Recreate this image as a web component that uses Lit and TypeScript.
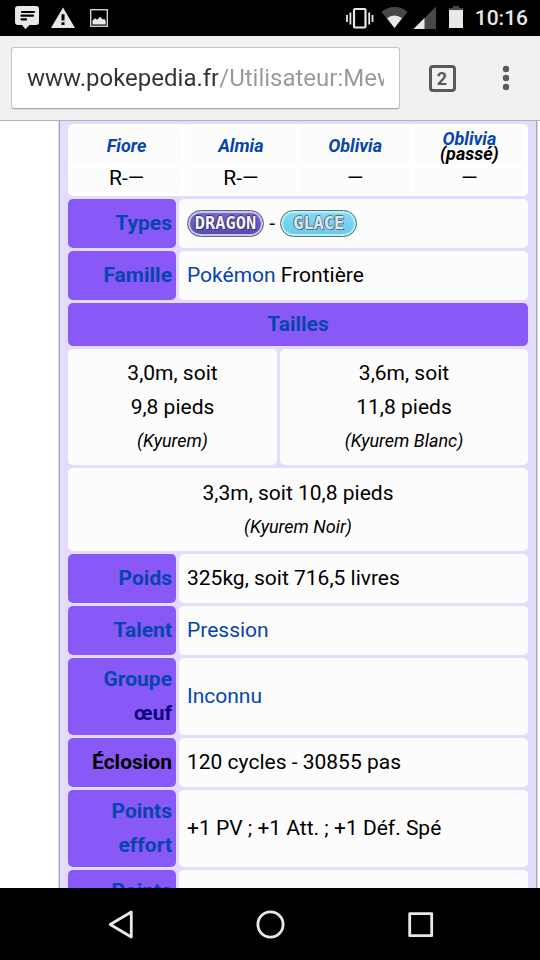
import { LitElement, html, css } from "lit";
import { customElement } from "lit/decorators.js";

@customElement("status-bar")
class StatusBar extends LitElement {
  static styles = css`
    :host {
      display: flex;
      justify-content: space-between;
      align-items: center;
      height: 36px;
      flex: none;
      padding: 0 12px 0 13px;
      background: #000;
      color: #e8e8e8;
    }
    .group {
      display: flex;
      align-items: center;
    }
    .notifications {
      gap: 8px;
    }
    .system {
      gap: 4px;
    }
    svg {
      display: block;
    }
    .time {
      font-size: 21px;
      line-height: 38px;
      font-weight: 500;
    }
  `;

  render() {
    return html`
      <div class="group notifications">
        <svg width="28" height="36" viewBox="0 0 28 36" aria-label="Message">
          <path fill="#e8e8e8" d="M5 6h18a3 3 0 0 1 3 3v13a3 3 0 0 1-3 3h-6.500l-4 4.300L9 25H5a3 3 0 0 1-3-3V9a3 3 0 0 1 3-3z" />
          <path stroke="#000" stroke-width="2.200" stroke-linecap="round" fill="none" d="M9 12h12M8.500 15.700h11.500M8.500 19.400h4.500" />
        </svg>
        <svg width="28" height="36" viewBox="0 0 28 36" aria-label="Avertissement">
          <path fill="#e8e8e8" d="M14 7.500L26 28H2z" />
          <path fill="#000" d="M12.500 14.200h3v6.300h-3zM12.500 22.300h3v2.800h-3z" />
        </svg>
        <svg width="28" height="36" viewBox="0 0 28 36" aria-label="Image">
          <rect x="5.700" y="9.700" width="16.600" height="16.600" fill="none" stroke="#d0d0d0" stroke-width="1.400" />
          <path fill="#e8e8e8" d="M7.500 24.500v-4l2.500-2.200 2 1.500 3.300-3 2.400 2.600 1.500-.700 1.500 2.300v3.500z" />
        </svg>
      </div>
      <div class="group system">
        <svg width="30" height="36" viewBox="0 0 30 36" aria-label="Vibreur">
          <rect x="9" y="9" width="11.500" height="18.500" rx="1" fill="none" stroke="#e8e8e8" stroke-width="2.200" />
          <path stroke="#e8e8e8" stroke-width="1.800" d="M5.400 12.500v12M2 15v7M24.200 12.500v12M27.500 15v7" />
        </svg>
        <svg width="30" height="36" viewBox="0 0 30 36" aria-label="Wi-Fi">
          <path fill="#484848" d="M2.500 12a19.500 19.500 0 0 1 26 0L15.500 28z" />
          <path fill="#e8e8e8" d="M8 18.200a12 12 0 0 1 15 0L15.500 28z" />
        </svg>
        <svg width="24" height="36" viewBox="0 0 24 36" aria-label="Réseau">
          <path fill="#484848" d="M23 6.500V29H.500z" />
          <path fill="#e8e8e8" d="M11.500 18v11H.500z" />
        </svg>
        <svg width="30" height="36" viewBox="0 0 30 36" aria-label="Batterie">
          <path fill="#484848" d="M12 6h6v2h4v3H8V8h4z" />
          <path fill="#e8e8e8" d="M8 10h14v18H8z" />
        </svg>
        <span class="time">10:16</span>
      </div>
    `;
  }
}

@customElement("browser-toolbar")
class BrowserToolbar extends LitElement {
  static styles = css`
    :host {
      display: flex;
      align-items: center;
      flex: none;
      box-sizing: border-box;
      height: 85px;
      padding: 0 2px 0 11px;
      background: #f1f1f1;
      border-bottom: 1px solid #b4b4b4;
    }
    .url {
      flex: 1;
      min-width: 0;
      box-sizing: border-box;
      height: 62px;
      margin: 0 10px 0 0;
      padding: 0 15px;
      border: 1px solid #c4c4c4;
      border-bottom-color: #a8a8a8;
      border-radius: 3px;
      background: #fff;
      display: flex;
      align-items: center;
      box-shadow: 0 1px 1px #ddd;
    }
    input {
      width: 100%;
      height: 38px;
      padding: 0;
      border: 0;
      outline: 0;
      font: 24px/38px Roboto, sans-serif;
      background: linear-gradient(90deg, #333 191px, #999 191px);
      -webkit-background-clip: text;
      background-clip: text;
      -webkit-text-fill-color: transparent;
    }
    button {
      width: 64px;
      height: 64px;
      padding: 0;
      border: 0;
      background: none;
      display: flex;
      align-items: center;
      justify-content: center;
    }
    .count {
      box-sizing: border-box;
      width: 27px;
      height: 27px;
      border: 3px solid #5a5a5a;
      border-radius: 4px;
      color: #5a5a5a;
      font: bold 18px/21px Roboto, sans-serif;
      text-align: center;
    }
  `;

  render() {
    return html`
      <div class="url">
        <input aria-label="Adresse" value="www.pokepedia.fr/Utilisateur:Mewtwo" />
      </div>
      <button aria-label="Onglets"><span class="count">2</span></button>
      <button aria-label="Menu">
        <svg width="8" height="26" viewBox="0 0 8 26" fill="#5a5a5a">
          <circle cx="4" cy="4" r="3.200" />
          <circle cx="4" cy="13" r="3.200" />
          <circle cx="4" cy="22" r="3.200" />
        </svg>
      </button>
    `;
  }
}

@customElement("type-badge")
class TypeBadge extends LitElement {
  static properties = { kind: { type: String }, label: { type: String } };
  declare kind: string;
  declare label: string;

  static styles = css`
    :host {
      display: inline-block;
      vertical-align: middle;
    }
    .badge {
      display: block;
      box-sizing: border-box;
      width: 77px;
      height: 27px;
      border: 1px solid #5c6f66;
      border-radius: 14px;
      font: bold 17px/25px "DejaVu Sans Mono", monospace;
      text-align: center;
      color: #f4f4fa;
    }
    .dragon {
      background: linear-gradient(#7a68d8, #5a48b0);
      box-shadow: inset 0 0 0 2px #c9c4ea;
      text-shadow: 1px 1px 0 #3b3170, -1px 0 0 #3b3170, 0 -1px 0 #3b3170;
    }
    .glace {
      background: linear-gradient(#84dcf4, #6cc8ea);
      box-shadow: inset 0 0 0 2px #b4f0f4;
      color: #dfe6ea;
      text-shadow: 1px 1px 0 #4c7286, -1px 0 0 #4c7286, 0 -1px 0 #4c7286;
    }
  `;

  render() {
    return html`<span class="badge ${this.kind}">${this.label}</span>`;
  }
}

@customElement("pokemon-infobox")
class PokemonInfobox extends LitElement {
  static styles = css`
    :host {
      display: block;
      padding: 0 5px;
      border: solid #a8a8a8;
      border-width: 0 1px;
      box-shadow: 0 0 0 1px #d8d8d4;
      background: #e5dcfd;
      color: #000;
      font-size: 21px;
      line-height: 34px;
    }
    a {
      color: #0645ad;
      text-decoration: none;
    }
    table {
      width: 100%;
      table-layout: fixed;
      border-spacing: 3px;
    }
    .label {
      width: 108px;
    }
    .split {
      width: 98px;
    }
    th,
    td {
      box-sizing: border-box;
      border-radius: 5px;
    }
    td {
      background: #fcfcfc;
      height: 49px;
      padding: 0 8px 2px;
    }
    th {
      background: #8859f7;
      padding: 3px 4px 5px;
      text-align: right;
    }
    .title {
      height: 43px;
      text-align: center;
    }
    .size {
      height: 83px;
      padding: 7px 8px;
      text-align: center;
    }
    .size i {
      display: block;
      font-size: 18px;
    }
    .double {
      height: 77px;
    }
    .plain {
      color: #10007e;
    }
    .games {
      height: auto;
      padding: 0;
      background: #fff;
    }
    .games th {
      height: 37px;
      padding: 0;
      background: #fcfcfc;
      text-align: center;
      font-size: 18px;
      line-height: 15px;
      font-style: italic;
    }
    .games td {
      height: 26px;
      padding: 0 0 4px;
      text-align: center;
      line-height: 22px;
    }
  `;

  row(label: unknown, value: unknown, double = false) {
    return html`<tr>
      <th scope="row" class=${double ? "double" : ""}>${label}</th>
      <td colspan="2">${value}</td>
    </tr>`;
  }

  render() {
    const link = (text: string) => html`<a href="#">${text}</a>`;
    return html`
      <table>
        <colgroup>
          <col class="label" />
          <col class="split" />
          <col />
        </colgroup>
        <tbody>
          <tr>
            <td class="games" colspan="3">
              <table>
                <thead>
                  <tr>
                    <th scope="col">${link("Fiore")}</th>
                    <th scope="col">${link("Almia")}</th>
                    <th scope="col">${link("Oblivia")}</th>
                    <th scope="col">${link("Oblivia")}<br />(passé)</th>
                  </tr>
                </thead>
                <tbody>
                  <tr>
                    <td>R-—</td>
                    <td>R-—</td>
                    <td>—</td>
                    <td>—</td>
                  </tr>
                </tbody>
              </table>
            </td>
          </tr>
          ${this.row(
            link("Types"),
            html`<a href="#"><type-badge kind="dragon" label="DRAGON"></type-badge></a> -
              <a href="#"><type-badge kind="glace" label="GLACE"></type-badge></a>`
          )}
          ${this.row(link("Famille"), html`${link("Pokémon")} Frontière`)}
          <tr>
            <th class="title" colspan="3">${link("Tailles")}</th>
          </tr>
          <tr>
            <td class="size" colspan="2">3,0m, soit<br />9,8 pieds <i>(Kyurem)</i></td>
            <td class="size">3,6m, soit<br />11,8 pieds <i>(Kyurem Blanc)</i></td>
          </tr>
          <tr>
            <td class="size" colspan="3">3,3m, soit 10,8 pieds <i>(Kyurem Noir)</i></td>
          </tr>
          ${this.row(link("Poids"), "325kg, soit 716,5 livres")}
          ${this.row(link("Talent"), link("Pression"))}
          ${this.row(html`${link("Groupe")}<br /><span class="plain">œuf</span>`, link("Inconnu"), true)}
          ${this.row("Éclosion", "120 cycles - 30855 pas")}
          ${this.row(html`<a href="#">Points<br />effort</a>`, "+1 PV ; +1 Att. ; +1 Déf. Spé", true)}
          ${this.row(html`<a href="#">Points<br />exp.</a>`, "", true)}
        </tbody>
      </table>
    `;
  }
}

@customElement("navigation-bar")
class NavigationBar extends LitElement {
  static styles = css`
    :host {
      display: flex;
      justify-content: center;
      flex: none;
      height: 72px;
      background: #000;
    }
    button {
      flex: 0 1 150px;
      padding: 0;
      border: 0;
      background: none;
      display: flex;
      align-items: center;
      justify-content: center;
    }
    svg {
      fill: none;
      stroke: #e8e8e8;
      stroke-width: 2.800;
      stroke-linejoin: round;
    }
  `;

  render() {
    return html`
      <button aria-label="Retour">
        <svg width="30" height="30" viewBox="0 0 30 30"><path d="M5.200 15.500L26.300 3v25z" /></svg>
      </button>
      <button aria-label="Accueil">
        <svg width="30" height="30" viewBox="0 0 30 30"><circle cx="15.500" cy="15.500" r="12.600" /></svg>
      </button>
      <button aria-label="Applications récentes">
        <svg width="30" height="30" viewBox="0 0 30 30"><path d="M4.700 4.700h22v22h-22z" /></svg>
      </button>
    `;
  }
}

@customElement("app-root")
class AppRoot extends LitElement {
  static styles = css`
    :host {
      display: flex;
      flex-direction: column;
      height: 100vh;
      font-family: Roboto, sans-serif;
      background: #fff;
    }
    main {
      flex: 1;
      min-height: 0;
      overflow: hidden;
      padding: 0 3px 0 59px;
    }
  `;

  render() {
    return html`
      <status-bar></status-bar>
      <browser-toolbar></browser-toolbar>
      <main><pokemon-infobox></pokemon-infobox></main>
      <navigation-bar></navigation-bar>
    `;
  }
}
